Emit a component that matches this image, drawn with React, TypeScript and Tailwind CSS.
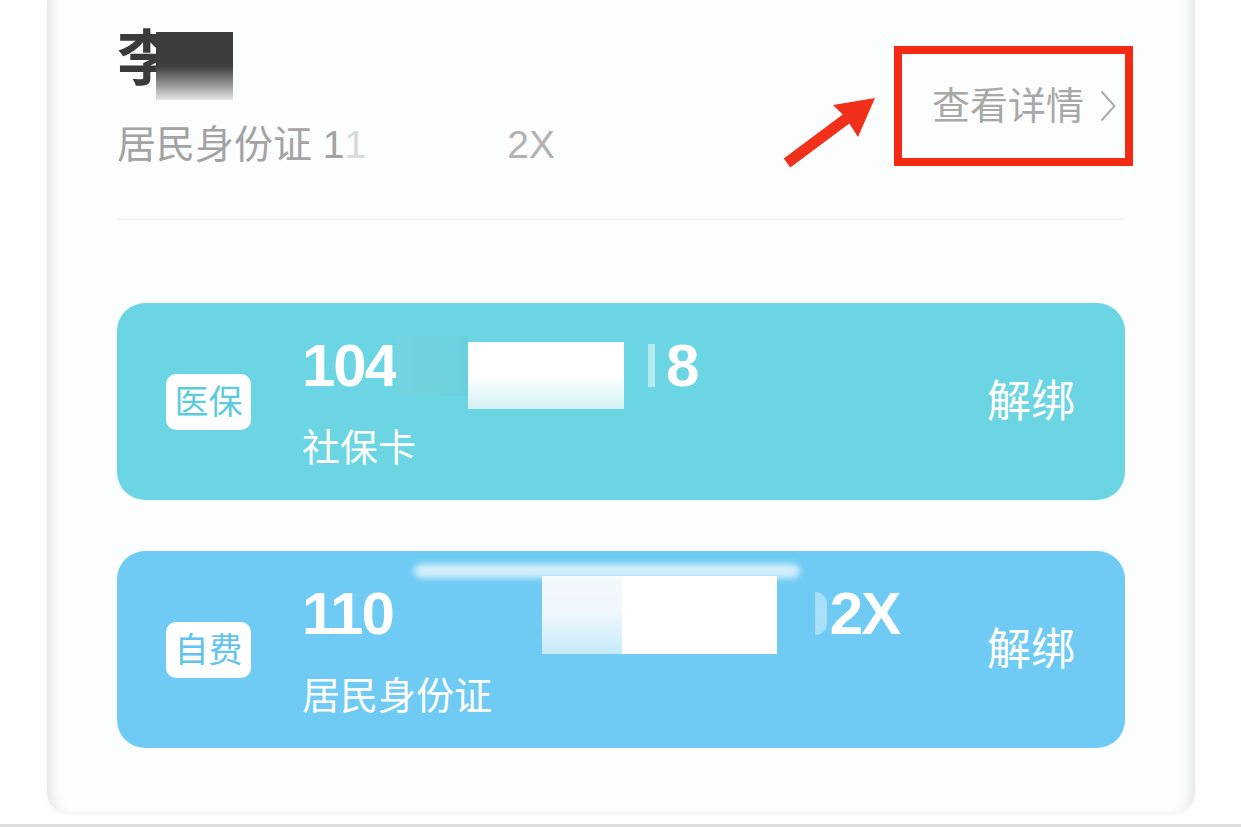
const font = "font-['Liberation_Sans','Noto_Sans_CJK_SC',sans-serif]";

type Bound = {
  tag: string;
  tagColor: string;
  cardColor: string;
  lead: string;
  tail: string;
  label: string;
  kind: 'medical' | 'self';
};

const bindings: Bound[] = [
  {
    tag: '医保',
    tagColor: 'text-[#5ccbdc]',
    cardColor: 'bg-[#6bd5e3]',
    lead: '104',
    tail: '8',
    label: '社保卡',
    kind: 'medical',
  },
  {
    tag: '自费',
    tagColor: 'text-[#62c3f0]',
    cardColor: 'bg-[#6fcbf4]',
    lead: '110',
    tail: '2X',
    label: '居民身份证',
    kind: 'self',
  },
];

function CardNumber({ item }: { item: Bound }) {
  if (item.kind === 'medical') {
    return (
      <div className="relative flex h-[60px] items-start text-[60px] font-bold leading-none tracking-[-2px] text-white">
        <span>{item.lead}</span>
        {/* redacted digits */}
        <span className="h-[60px] w-[72px] bg-gradient-to-r from-[#74d3df] to-[#6bd0de]" />
        <span className="mt-[6px] h-[67px] w-[156px] bg-gradient-to-b from-white via-white to-white/70" />
        <span className="ml-[24px] mt-[8px] h-[43px] w-[7px] bg-white/50" />
        <span className="ml-[11px]">{item.tail}</span>
      </div>
    );
  }
  return (
    <div className="relative flex h-[60px] items-start text-[60px] font-bold leading-none tracking-[-2px] text-white">
      <span>{item.lead}</span>
      {/* redacted digits */}
      <span className="absolute left-[112px] top-[-20px] h-[14px] w-[386px] rounded-full bg-white/70 blur-[3px]" />
      <span className="w-[149px]" />
      <span className="mt-[-8px] flex h-[78px] w-[235px]">
        <span className="h-full w-[80px] bg-gradient-to-b from-[#f4f9fd] via-[#eef6fc] to-white/60" />
        <span className="h-full flex-1 bg-white" />
      </span>
      <span className="ml-[38px] mt-[8px] h-[43px] w-[12px] rounded-r-full bg-white/40" />
      <span className="ml-[3px]">{item.tail}</span>
    </div>
  );
}

function BindingCard({ item }: { item: Bound }) {
  return (
    <div className={`flex h-[197px] items-center rounded-[28px] pl-[49px] pr-[50px] ${item.cardColor}`}>
      <div className="flex h-[56px] w-[85px] items-center justify-center rounded-[10px] bg-white">
        <span className={`text-[34px] leading-none ${item.tagColor}`}>{item.tag}</span>
      </div>
      <div className="ml-[51px] flex flex-1 flex-col gap-[33px]">
        <CardNumber item={item} />
        <span className="text-[38px] leading-none text-white">{item.label}</span>
      </div>
      <span className="text-[44px] leading-none text-white">解绑</span>
    </div>
  );
}

export default function App() {
  return (
    <div className={`flex h-[827px] w-[1241px] flex-col overflow-hidden bg-white ${font}`}>
      <div className="flex min-h-0 flex-1 pl-[47px]">
        <div className="relative mb-[12px] w-[1148px] rounded-b-[20px] bg-[#fbfdfe] px-[70px] pb-[67px] pt-[30px] shadow-[inset_16px_0_12px_-12px_rgba(0,0,0,0.10),inset_-16px_0_12px_-12px_rgba(0,0,0,0.10),0_2px_4px_rgba(0,0,0,0.05)]">
          {/* header: holder and details link */}
          <div className="flex items-start justify-between border-b border-[#eef1f3] pb-[53px]">
            <div className="flex flex-col gap-[35px]">
              <div className="relative h-[60px]">
                <span className="text-[60px] font-bold leading-none text-[#3a3a3a]">李</span>
                <span className="absolute left-[39px] top-[2px] h-[68px] w-[77px] bg-gradient-to-b from-[#3d3d3d] via-[#3d3d3d] to-[#e6e6e6]" />
              </div>
              <div className="flex items-center text-[39px] leading-none text-[#a3a3a3]">
                <span>居民身份证 1</span>
                <span className="text-[#dadada]">1</span>
                <span className="ml-[141px] text-[#b3b3b3]">2X</span>
              </div>
            </div>
            <div className="-mr-[8px] mt-[16px] flex h-[120px] w-[239px] items-center border-[8px] border-[#f42a12] pl-[30px]">
              <span className="text-[38px] leading-none text-[#a8a8a8]">查看详情</span>
              <svg className="ml-[16px] h-[32px] w-[16px]" viewBox="0 0 16 32" fill="none">
                <polyline points="1.5,1.5 14.5,16 1.5,30.5" stroke="#ababab" strokeWidth="2" />
              </svg>
            </div>
          </div>

          {/* annotation arrow */}
          <svg className="absolute left-[733px] top-[90px] h-[80px] w-[100px]" viewBox="780 90 100 80">
            <polygon
              points="783.7,158.6 842.7,114.6 833,105 875,98 858,137 849.3,123.4 790.3,167.4"
              fill="#f0301a"
            />
          </svg>

          <div className="mt-[83px] flex flex-col gap-[51px]">
            {bindings.map(b => (
              <BindingCard key={b.tag} item={b} />
            ))}
          </div>
        </div>
      </div>
      <div className="h-[3px] bg-[#dcdee1]" />
    </div>
  );
}
